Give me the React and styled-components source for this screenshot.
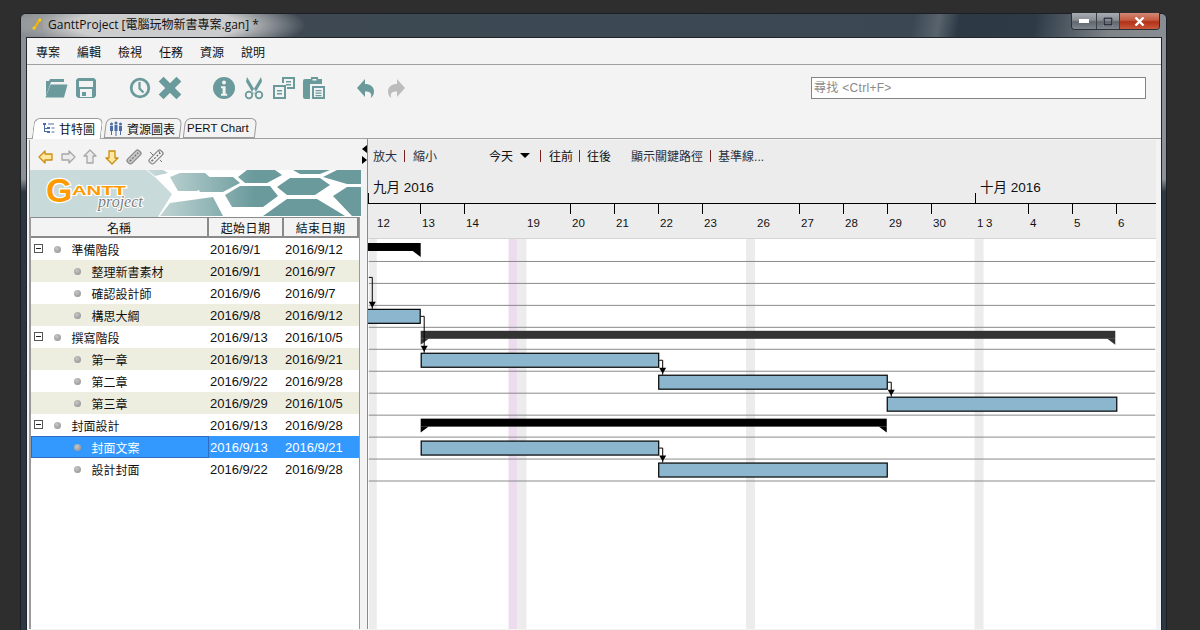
import React from 'react';
import styled, { createGlobalStyle } from 'styled-components';

const FONT = '"Liberation Sans", "Noto Sans CJK TC", sans-serif';
const TEAL = '#6a9a9c';

const GlobalStyle = createGlobalStyle`
html, body {
  margin: 0;
  padding: 0;
  height: 630px;
  overflow: hidden;
  background: #2e2e2e;
  font-family: ${FONT};
}
* { box-sizing: border-box; }
`;

const Frame = styled.div`
margin: 13px 0 0 20px;
width: 1147px;
height: 640px;
padding: 0 4px 0 5px;
border: 1px solid #1b1f24;
border-radius: 6px 6px 0 0;
background: linear-gradient(180deg, #8b9196 0, #8b9196 165px, #2b3742 178px);
`;

const TitleBar = styled.div`
height: 23px;
margin: 0 -4px 0 -5px;
padding-left: 9px;
display: flex;
align-items: flex-start;
border-radius: 5px 5px 0 0;
background:
  radial-gradient(ellipse 150px 30px at 135px 11px, rgba(210, 210, 210, 0.95) 55%, rgba(210, 210, 210, 0) 100%),
  linear-gradient(100deg, #878c90 0, #6d7277 25px, #3d4852 280px, #3b4854 880px, #59636c 905px, #2d3a46 925px, #2e3b47 1000px, #7e8388 1075px, #8b9196 1147px);
`;

const AppLogo = styled.svg`
margin: 3px 4px 0 0;
flex: none;
`;

const TitleText = styled.span`
font: 12px "Open Sans", "Noto Sans CJK TC", sans-serif;
line-height: 16px;
margin-top: 3px;
color: #111;
`;

const WinButtons = styled.div`
margin: -1px 6px 0 auto;
height: 17px;
display: flex;
border: 1px solid #2a2f35;
border-top: 0;
border-radius: 0 0 4px 4px;
overflow: hidden;
`;

const WinButton = styled.div`
width: ${p => p.$w}px;
display: flex;
align-items: center;
justify-content: center;
border-left: ${p => (p.$first ? 0 : '1px solid #3a3f45')};
background: ${p => (p.$close
    ? 'linear-gradient(180deg, #d18a78 0, #c4593f 45%, #b13018 55%, #c9583c 100%)'
    : 'linear-gradient(180deg, #a7adb2 0, #878d93 45%, #5e656c 55%, #7f868c 100%)')};
`;

const Inner = styled.div`
height: 620px;
background: #f3f3f3;
border: 1px solid #20252a;
border-bottom: 0;
`;

const MenuBar = styled.div`
height: 27px;
padding: 1px 0 0 9px;
display: flex;
align-items: center;
gap: 17px;
border-bottom: 1px solid #a0a0a0;
font-size: 12px;
color: #111;
`;

const ToolRow = styled.div`
height: 53px;
padding: 12px 15px 0 14px;
display: flex;
align-items: flex-start;
`;

const ToolGroup = styled.div`
display: flex;
margin-right: ${p => p.$gap}px;
`;

const ToolSlot = styled.div`
width: 30px;
height: 22px;
display: flex;
align-items: center;
justify-content: center;
color: ${p => (p.$off ? '#bcbcbc' : TEAL)};
`;

const SearchBox = styled.input`
margin-left: auto;
width: 335px;
height: 22px;
padding: 0 2px;
border: 1px solid #848484;
background: #fff;
font-family: ${FONT};
font-size: 12px;
letter-spacing: 0.3px;
&::placeholder { color: #8a8a8a; opacity: 1; }
`;

const TabStrip = styled.div`
height: 21px;
padding-left: 3px;
display: flex;
align-items: flex-end;
border-bottom: 1px solid #a0a0a0;
`;

const Tab = styled.div`
position: relative;
height: ${p => (p.$active ? 21 : 20)}px;
margin-bottom: ${p => (p.$active ? -1 : 0)}px;
width: ${p => p.$w}px;
padding-left: ${p => p.$pad}px;
display: flex;
align-items: center;
gap: 4px;
font-size: 12px;
color: #111;
z-index: ${p => (p.$active ? 2 : 1)};
&::before {
  content: '';
  position: absolute;
  inset: 0 0 0 3px;
  z-index: -1;
  background: ${p => (p.$active ? '#fff' : '#f3f3f3')};
  border: 1px solid #9a9a9a;
  border-bottom: ${p => (p.$active ? 0 : '1px solid #9a9a9a')};
  border-radius: 6px 6px 0 0;
  transform: skewX(-7deg);
}
`;

const TabLatin = styled.span`
font-size: 11.5px;
`;

const Body = styled.div`
display: flex;
padding-left: 2px;
height: 490px;
`;

const LeftPanel = styled.div`
width: 332px;
margin-top: 1px;
border-left: 1px solid #9a9a9a;
display: flex;
flex-direction: column;
`;

const LeftTools = styled.div`
height: 30px;
padding: 3px 0 0 5px;
display: flex;
align-items: center;
`;

const ArrowSlot = styled.div`
width: 22px;
height: 16px;
display: flex;
align-items: center;
justify-content: center;
`;

const Banner = styled.svg`
display: block;
flex: none;
`;

const Table = styled.div`
flex: 1;
width: 330px;
border-left: 1px solid #9a9a9a;
border-right: 1px solid #9a9a9a;
background: #fff;
`;

const HeadRow = styled.div`
height: 21px;
display: grid;
grid-template-columns: 178px 75px 75px;
border-top: 1px solid #8a8a8a;
background: #f3f3f3;
`;

const HeadCell = styled.div`
display: flex;
align-items: center;
justify-content: center;
padding-top: 1px;
font-size: 12px;
letter-spacing: ${p => p.$spread ?? 0}px;
color: #111;
border-right: 2px solid #8a8a8a;
border-bottom: 2px solid #8a8a8a;
`;

const Row = styled.div`
height: 22px;
display: grid;
grid-template-columns: 178px 75px 75px;
background: ${p => (p.$selected ? '#3399ff' : p.$alt ? '#eeeee0' : '#fff')};
color: ${p => (p.$selected ? '#fff' : '#111')};
`;

const NameCell = styled.div`
position: relative;
display: flex;
align-items: center;
padding: 1px 0 0 ${p => (p.$level ? 42 : 22)}px;
font-size: 12px;
border: 1px solid ${p => (p.$selected ? '#2e6cc0' : 'transparent')};
`;

const DateCell = styled.div`
display: flex;
align-items: center;
padding: 1px 0 0 1px;
font-size: 13px;
`;

const Expander = styled.span`
position: absolute;
left: 2px;
top: 5px;
width: 9px;
height: 9px;
border: 1px solid #555;
background: #fff;
&::after {
  content: '';
  position: absolute;
  left: 1px;
  top: 3px;
  width: 5px;
  height: 1px;
  background: #222;
}
`;

const Bullet = styled.span`
width: 7px;
height: 7px;
margin: -1px 10.5px 0 0;
border-radius: 50%;
flex: none;
background: radial-gradient(circle at 40% 35%, #c6c6c6, #8c8c8c);
`;

const Splitter = styled.div`
width: 6px;
padding-top: 6px;
display: flex;
flex-direction: column;
align-items: flex-end;
gap: 3px;
`;

const Caret = styled.span`
width: 0;
height: 0;
border-top: 4.5px solid transparent;
border-bottom: 4.5px solid transparent;
${p => (p.$right ? 'border-left: 5px solid #000;' : 'border-right: 5px solid #000;')}
`;

const RightPanel = styled.div`
width: 789px;
border-left: 1px solid #8a8a8a;
display: flex;
flex-direction: column;
`;

const ChartHead = styled.div`
height: 99px;
margin-top: 1px;
background: #ececec;
border-bottom: 1px solid #d4d4d4;
`;

const ChartTools = styled.div`
height: 31px;
padding: 0 0 0 5px;
display: flex;
align-items: center;
font-size: 12px;
color: #223;
`;

const ChartLink = styled.span`
margin-left: ${p => p.$ml ?? 0}px;
color: ${p => (p.$dark ? '#111' : '#2a3040')};
`;

const Sep = styled.i`
width: 1px;
height: 12px;
margin: 0 ${p => p.$r ?? 7}px 0 ${p => p.$l ?? 6}px;
background: #7a1f1f;
`;

const DropMark = styled.span`
width: 0;
height: 0;
margin: 0 0 0 7px;
border-left: 5px solid transparent;
border-right: 5px solid transparent;
border-top: 5px solid #000;
`;

const MonthRow = styled.div`
height: 33px;
display: flex;
border-bottom: 1px solid #000;
`;

const Month = styled.div`
width: ${p => p.$w}px;
position: relative;
padding: 5px 0 0 5px;
font-size: 13.5px;
color: #111;
white-space: nowrap;
&::before {
  content: '';
  position: absolute;
  left: 0;
  bottom: 0;
  width: 1px;
  height: 10px;
  background: #000;
}
`;

const DayRow = styled.div`
display: flex;
height: 33px;
`;

const Day = styled.div`
position: relative;
flex: none;
width: ${p => p.$w}px;
padding: 13px 0 0 ${p => p.$pad ?? 2}px;
font-size: 11.5px;
color: #111;
white-space: nowrap;
&::before {
  content: '';
  display: ${p => (p.$tick ? 'block' : 'none')};
  position: absolute;
  left: 0;
  top: 0;
  width: 1px;
  height: 10px;
  background: #000;
}
`;

const Chart = styled.svg`
display: block;
background: #fff;
`;

const tasks = [
  { name: '準備階段', start: '2016/9/1', end: '2016/9/12', group: true },
  { name: '整理新書素材', start: '2016/9/1', end: '2016/9/7' },
  { name: '確認設計師', start: '2016/9/6', end: '2016/9/7' },
  { name: '構思大綱', start: '2016/9/8', end: '2016/9/12' },
  { name: '撰寫階段', start: '2016/9/13', end: '2016/10/5', group: true },
  { name: '第一章', start: '2016/9/13', end: '2016/9/21' },
  { name: '第二章', start: '2016/9/22', end: '2016/9/28' },
  { name: '第三章', start: '2016/9/29', end: '2016/10/5' },
  { name: '封面設計', start: '2016/9/13', end: '2016/9/28', group: true },
  { name: '封面文案', start: '2016/9/13', end: '2016/9/21', selected: true },
  { name: '設計封面', start: '2016/9/22', end: '2016/9/28' },
];

const days = [
  { t: '12', w: 52, pad: 9 },
  { t: '13', w: 44, tick: true },
  { t: '14', w: 44, tick: true },
  { t: '', w: 18 },
  { t: '19', w: 44, pad: 1 },
  { t: '20', w: 44, tick: true },
  { t: '21', w: 44, tick: true },
  { t: '22', w: 44, tick: true },
  { t: '23', w: 44, tick: true },
  { t: '', w: 9 },
  { t: '26', w: 44 },
  { t: '27', w: 44, tick: true },
  { t: '28', w: 44, tick: true },
  { t: '29', w: 44, tick: true },
  { t: '30', w: 44, tick: true },
  { t: '1', w: 9 },
  { t: '3', w: 44 },
  { t: '4', w: 44, tick: true },
  { t: '5', w: 44, tick: true },
  { t: '6', w: 40, tick: true },
];

// x values are page pixels, the chart starts at 368
const OX = 368;
const stripes = [
  [368, 8, '#ececec'], [508, 9, '#ecdcee'], [517, 9, '#ececec'], [746, 9, '#ececec'], [975, 9, '#ececec'],
];
const bars = [
  [3, 366, 420], [5, 420, 659], [6, 658, 888], [7, 887, 1118], [9, 420, 659], [10, 658, 888],
];
const summaries = [
  [0, 360, 420, '#000', false], [4, 420, 1116, '#333', true], [8, 420, 887, '#000', true],
];
const links = [
  [368, 277, 371, 309], [420, 316, 423, 353], [659, 360, 662, 375], [888, 382, 891, 397], [659, 448, 662, 463],
];

const ChartBody = () => (
  <Chart width="788" height="391" viewBox={`${OX} 239 788 391`}>
    {stripes.map(([x, w, c]) => <rect key={x} x={x} y="239" width={w} height="391" fill={c} />)}
    {tasks.map((t, i) => (
      <rect key={t.name} x={OX} y={261 + i * 22} width="788" height="1" fill="#8a8a8a" />
    ))}
    {summaries.map(([row, x1, x2, c, both]) => {
      const y = 243 + row * 22;
      return (
        <g key={row} fill={c}>
          <rect x={x1} y={y} width={x2 - x1} height="8" />
          <polygon points={`${x2 - 8},${y + 8} ${x2},${y + 8} ${x2},${y + 14}`} />
          {both && <polygon points={`${x1},${y + 8} ${x1 + 8},${y + 8} ${x1},${y + 14}`} />}
        </g>
      );
    })}
    {bars.map(([row, x1, x2]) => (
      <rect key={row} x={x1 + 0.5} y={309.5 + (row - 3) * 22} width={x2 - x1 - 1} height="14" fill="#8cb6ce" stroke="#000" strokeWidth="1.2" />
    ))}
    {links.map(([x1, y1, x2, y2]) => (
      <g key={y1}>
        <path d={`M${x1} ${y1 + 0.5}H${x2 + 0.5}V${y2}`} fill="none" stroke="#000" />
        <polygon points={`${x2 - 3},${y2 - 7} ${x2 + 4},${y2 - 7} ${x2 + 0.5},${y2 - 1}`} fill="#000" />
      </g>
    ))}
  </Chart>
);

const I = ({ w = 24, h = 24, box, children }) => (
  <svg width={w} height={h} viewBox={box || `0 0 ${w} ${h}`} fill="currentColor">{children}</svg>
);

const Tools = {
  open: (
    <I>
      <path d="M2 5h3l1-2h14v3H7L2 20z" />
      <path d="M6.5 8.5h17L20 21.5H1.5z" />
    </I>
  ),
  save: (
    <I w={22} h={22}>
      <path fillRule="evenodd" d="M3 1h16l2 2v16l-2 2H3l-2-2V3zM4 4v6h14V4zM5 12v8h12v-8z" />
      <rect x="7" y="15" width="4" height="4" />
    </I>
  ),
  clock: (
    <I>
      <circle cx="12" cy="12" r="8.8" fill="none" stroke="currentColor" strokeWidth="2.8" />
      <path d="M11.5 6v6.5l4 4" fill="none" stroke="currentColor" strokeWidth="2.2" />
    </I>
  ),
  close: (
    <I>
      <path d="M5.5 5.5l13 13M18.500 5.500l-13 13" stroke="currentColor" strokeWidth="6.800" strokeLinecap="square" />
    </I>
  ),
  info: (
    <I>
      <circle cx="12" cy="12" r="11" />
      <circle cx="12" cy="6.6" r="2" fill="#f3f3f3" />
      <path d="M9 10.3h4.6v7.4h1.6v2H9v-2h1.6v-5.4H9z" fill="#f3f3f3" />
    </I>
  ),
  cut: (
    <I>
      <path d="M5 1l9 15-3 1.500-7-12zM19 1l-9 15 3 1.500 7-12z" />
      <circle cx="7" cy="19" r="3.300" fill="none" stroke="currentColor" strokeWidth="1.800" />
      <circle cx="17" cy="19" r="3.300" fill="none" stroke="currentColor" strokeWidth="1.800" />
    </I>
  ),
  copy: (
    <I>
      <path fillRule="evenodd" d="M10 1h13v12h-8v-2h6V3H12v4h-2z" />
      <path d="M14 5h5v1.500h-5zM14 8h5v1.500h-5z" />
      <path fillRule="evenodd" d="M1 9h13v14H1zM3 11v10h9V11z" />
      <path d="M5 14h5v1.500H5zM5 17h5v1.500H5z" />
    </I>
  ),
  paste: (
    <I>
      <path fillRule="evenodd" d="M6 3h3V1h7v2h4v5H8v15H3a2 2 0 0 1-2-2V5a2 2 0 0 1 2-2zM10.500 3v1.500h4V3z" />
      <path fillRule="evenodd" d="M10 10h13v13H10zM12 12v9h9v-9z" />
      <path d="M13.500 14h6v1.300h-6zM13.500 16.500h6v1.300h-6zM13.500 19h6v1.300h-6z" />
    </I>
  ),
  undo: (
    <I w={20} h={22}>
      <path d="M9 2v5c5 0 9 2.500 9 7.500 0 2.500-1 5-3.500 6.500 1-2 1-3.500 0-5-1-1.200-3-1.500-5.500-1.500V20L1 11z" />
    </I>
  ),
  redo: (
    <I w={20} h={22}>
      <path d="M11 2v5c-5 0-9 2.500-9 7.500 0 2.500 1 5 3.500 6.500-1-2-1-3.500 0-5 1-1.200 3-1.500 5.500-1.500V20l8-9z" />
    </I>
  ),
};

const Arrow = ({ points, off }) => (
  <svg width="16" height="16" viewBox="0 0 16 16">
    <polygon points={points} fill={off ? '#ececec' : '#ffe7a0'} stroke={off ? '#a6a6a6' : '#c98d12'} strokeWidth="1.300" strokeLinejoin="round" />
  </svg>
);

const LinkIcon = ({ broken }) => (
  <svg width="16" height="16" viewBox="0 0 16 16">
    <g transform="rotate(-45 8 8)" fill="none" stroke="#8a8a8a" strokeWidth="1.300">
      <rect x="0" y="5" width="16" height="6" rx="2" fill={broken ? 'none' : '#c8c8c8'} />
      <path d="M2 8h12" stroke="#6f6f6f" strokeDasharray="2 1.500" />
    </g>
    {broken && <path d="M2 3l3 3M12 11l2 2M3 12l2-1M11 2l1 3" stroke="#777" strokeWidth="1" />}
  </svg>
);

const hexes = [
  '170,178 180,174 205,174 213,181 197,192 178,192',
  '193,180 207,178 233,178 240,184 223,193 200,193',
  '160,217 170,204 213,198 223,217',
  '238,178 247,171 275,171 282,176 267,184 245,184',
  '293,171 330,171 320,175 300,175',
  '277,188 290,179 320,179 330,186 315,196 287,196',
  '225,196 240,187 270,187 278,197 263,208 232,208',
  '263,217 287,200 317,200 337,212 345,217',
  '323,178 337,171 361,171 361,185 347,185',
  '333,197 347,188 361,188 361,217 352,217',
  '147,171 163,171 168,174 155,177',
];

const LogoBanner = () => (
  <Banner width="331" height="47" viewBox="30 171 331 47">
    <defs>
      <linearGradient id="hexFill" gradientUnits="userSpaceOnUse" x1="150" y1="0" x2="255" y2="0">
        <stop offset="0" stopColor="#c8dad9" />
        <stop offset="1" stopColor={TEAL} />
      </linearGradient>
    </defs>
    <rect x="30" y="171" width="331" height="47" fill="#c8dad9" />
    <polygon points="146,171 361,171 361,218 158,218 172,195 155,178" fill="#fff" />
    {hexes.map(p => <polygon key={p} points={p} fill="url(#hexFill)" />)}
    <text x="46" y="203" fontSize="34" fill="#ff9a00" stroke="#fff" strokeWidth="2.500" paintOrder="stroke" fontFamily="Liberation Sans, sans-serif" fontWeight="700">G</text>
    <text x="72" y="196" fontSize="13" textLength="54" lengthAdjust="spacingAndGlyphs" fill="#ff9a00" stroke="#fff" strokeWidth="2" paintOrder="stroke" fontFamily="Liberation Sans, sans-serif" fontWeight="700">ANTT</text>
    <text x="98" y="208" fill="#7d7d7d" stroke="#fff" strokeWidth="2" paintOrder="stroke" fontFamily="Liberation Serif, serif" fontStyle="italic" fontSize="16">project</text>
  </Banner>
);

const GanttTabIcon = () => (
  <svg width="13" height="13" viewBox="0 0 13 13" fill="#4a6fa8">
    <path d="M1 1h3v2H1zM2 3h1v7h-1zM3 6h2v1H3zM3 9h2v1H3zM5 5h3v2H5zM5 9h3v2H5zM6 1.500h6v1H6zM9.500 5.500h3v1h-3zM9.500 9.500h3v1h-3z" />
  </svg>
);

const PeopleTabIcon = () => (
  <svg width="14" height="15" viewBox="0 0 14 15" fill="#4a6fa8">
    <circle cx="2.500" cy="3" r="1.500" />
    <circle cx="7" cy="2" r="1.500" />
    <circle cx="11.500" cy="3" r="1.500" />
    <path d="M1 5h3v5H3v4H2v-4H1zM5.500 4h3v6h-1v5h-1v-5h-1zM10 5h3v5h-1v4h-1v-4h-1z" />
  </svg>
);

const App = () => (
  <>
    <GlobalStyle />
    <Frame>
      <TitleBar>
        <AppLogo width="14" height="14" viewBox="0 0 14 14">
          <rect x="0" y="1" width="13" height="12" rx="3" fill="#9a9a9a" />
          <path d="M4 12L10 2" stroke="#f5b400" strokeWidth="2.200" />
          <circle cx="10" cy="3" r="1.500" fill="#ffd000" />
          <circle cx="4" cy="11" r="1.500" fill="#ffd000" />
        </AppLogo>
        <TitleText>GanttProject [電腦玩物新書專案.gan] *</TitleText>
        <WinButtons>
          <WinButton $w={24} $first>
            <svg width="10" height="4"><rect width="10" height="4" fill="#fff" /></svg>
          </WinButton>
          <WinButton $w={23}>
            <svg width="10" height="9"><rect x="1" y="1" width="8" height="7" fill="none" stroke="#223" strokeWidth="1.500" /><rect x="0" y="0" width="10" height="9" fill="none" stroke="#ddd" strokeWidth=".6" /></svg>
          </WinButton>
          <WinButton $w={40} $close>
            <svg width="11" height="9" viewBox="0 0 11 9"><path d="M1.500 .5l8 8M9.500 .5l-8 8" stroke="#fff" strokeWidth="2.400" /></svg>
          </WinButton>
        </WinButtons>
      </TitleBar>
      <Inner>
        <MenuBar>
          {['專案', '編輯', '檢視', '任務', '資源', '說明'].map(m => <span key={m}>{m}</span>)}
        </MenuBar>
        <ToolRow>
          <ToolGroup $gap={24}>
            <ToolSlot>{Tools.open}</ToolSlot>
            <ToolSlot>{Tools.save}</ToolSlot>
          </ToolGroup>
          <ToolGroup $gap={24}>
            <ToolSlot>{Tools.clock}</ToolSlot>
            <ToolSlot>{Tools.close}</ToolSlot>
          </ToolGroup>
          <ToolGroup $gap={22}>
            <ToolSlot>{Tools.info}</ToolSlot>
            <ToolSlot>{Tools.cut}</ToolSlot>
            <ToolSlot>{Tools.copy}</ToolSlot>
            <ToolSlot>{Tools.paste}</ToolSlot>
          </ToolGroup>
          <ToolGroup $gap={0}>
            <ToolSlot>{Tools.undo}</ToolSlot>
            <ToolSlot $off>{Tools.redo}</ToolSlot>
          </ToolGroup>
          <SearchBox placeholder="尋找 <Ctrl+F>" />
        </ToolRow>
        <TabStrip>
          <Tab $active $w={72} $pad={12}><GanttTabIcon />甘特圖</Tab>
          <Tab $w={79} $pad={7}><PeopleTabIcon />資源圖表</Tab>
          <Tab $w={75} $pad={6}><TabLatin>PERT Chart</TabLatin></Tab>
        </TabStrip>
        <Body>
          <LeftPanel>
            <LeftTools>
              <ArrowSlot><Arrow points="1,8 7,2 7,5 14,5 14,11 7,11 7,14" /></ArrowSlot>
              <ArrowSlot><Arrow off points="15,8 9,2 9,5 2,5 2,11 9,11 9,14" /></ArrowSlot>
              <ArrowSlot><Arrow off points="8,1 14,7 11,7 11,14 5,14 5,7 2,7" /></ArrowSlot>
              <ArrowSlot><Arrow points="8,15 14,9 11,9 11,2 5,2 5,9 2,9" /></ArrowSlot>
              <ArrowSlot><LinkIcon /></ArrowSlot>
              <ArrowSlot><LinkIcon broken /></ArrowSlot>
            </LeftTools>
            <LogoBanner />
            <Table>
              <HeadRow>
                <HeadCell>名稱</HeadCell>
                <HeadCell $spread={0.4}>起始日期</HeadCell>
                <HeadCell $spread={0.4}>結束日期</HeadCell>
              </HeadRow>
              {tasks.map((t, i) => (
                <Row key={t.name} $alt={i % 2 === 1 && !t.selected} $selected={t.selected}>
                  <NameCell $level={t.group ? 0 : 1} $selected={t.selected}>
                    {t.group && <Expander />}
                    <Bullet />
                    {t.name}
                  </NameCell>
                  <DateCell>{t.start}</DateCell>
                  <DateCell>{t.end}</DateCell>
                </Row>
              ))}
            </Table>
          </LeftPanel>
          <Splitter>
            <Caret />
            <Caret $right />
          </Splitter>
          <RightPanel>
            <ChartHead>
              <ChartTools>
                <ChartLink>放大</ChartLink>
                <Sep $l={7} $r={8} />
                <ChartLink>縮小</ChartLink>
                <ChartLink $dark $ml={52}>今天</ChartLink>
                <DropMark />
                <Sep $l={10} $r={8} />
                <ChartLink $dark>往前</ChartLink>
                <Sep />
                <ChartLink $dark>往後</ChartLink>
                <ChartLink $ml={20}>顯示關鍵路徑</ChartLink>
                <Sep $l={7} />
                <ChartLink>基準線...</ChartLink>
              </ChartTools>
              <MonthRow>
                <Month $w={607}>九月 2016</Month>
                <Month $w={181}>十月 2016</Month>
              </MonthRow>
              <DayRow>
                {days.map((d, i) => (
                  <Day key={i} $w={d.w} $pad={d.pad} $tick={d.tick}>{d.t}</Day>
                ))}
              </DayRow>
            </ChartHead>
            <ChartBody />
          </RightPanel>
        </Body>
      </Inner>
    </Frame>
  </>
);

export default App;
